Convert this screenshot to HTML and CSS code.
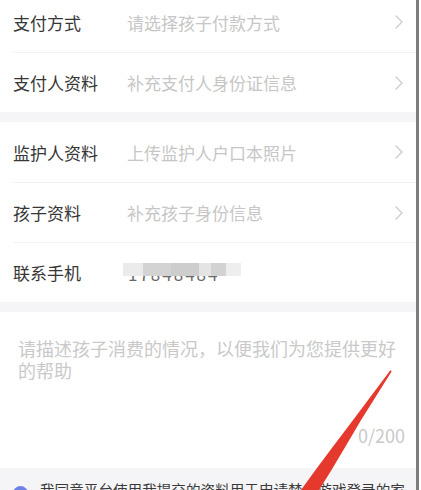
FILE: index.html
```html
<!DOCTYPE html>
<html lang="zh-CN">
<head>
<meta charset="utf-8">
<title>申请</title>
<link rel="stylesheet" href="styles.css">
</head>
<body>
<div class="page">
  <section class="group">
    <div class="row">
      <span class="label">支付方式</span>
      <span class="hint">请选择孩子付款方式</span>
      <svg class="chev" viewBox="0 0 8 14" width="8" height="14"><polyline points="1,1 7,7 1,13" /></svg>
    </div>
    <div class="row">
      <span class="label">支付人资料</span>
      <span class="hint">补充支付人身份证信息</span>
      <svg class="chev" viewBox="0 0 8 14" width="8" height="14"><polyline points="1,1 7,7 1,13" /></svg>
    </div>
  </section>
  <div class="band"></div>
  <section class="group">
    <div class="row">
      <span class="label">监护人资料</span>
      <span class="hint">上传监护人户口本照片</span>
      <svg class="chev" viewBox="0 0 8 14" width="8" height="14"><polyline points="1,1 7,7 1,13" /></svg>
    </div>
    <div class="row">
      <span class="label">孩子资料</span>
      <span class="hint">补充孩子身份信息</span>
      <svg class="chev" viewBox="0 0 8 14" width="8" height="14"><polyline points="1,1 7,7 1,13" /></svg>
    </div>
    <div class="row">
      <span class="label">联系手机</span>
      <span class="phone">
        <span class="digits">17848484</span>
        <span class="mosaic">
          <i class="m1"></i><i class="m2"></i><i class="m3"></i><i class="m4"></i><i class="m5"></i><i class="m6"></i>
        </span>
      </span>
    </div>
  </section>
  <div class="band"></div>
  <section class="desc">
    <p class="desc-hint">请描述孩子消费的情况，以便我们为您提供更好的帮助</p>
    <div class="count">0/200</div>
  </section>
  <footer class="agree">
    <span class="dot"></span>
    <span class="agree-text">我同意平台使用我提交的资料用于申请禁止游戏登录的家长监护服务</span>
  </footer>
</div>
<svg class="arrow" viewBox="0 0 421 490" width="421" height="490">
  <polygon points="390.5,370 391.6,371.6 361.1,420 343.4,450 331.5,470 319,490 313.3,500 293.3,500 301,490 315.5,470 330.4,450 353.1,420 389.4,371.6" />
</svg>
</body>
</html>
```

FILE: styles.css
```css
html, body {
  margin: 0;
  padding: 0;
  background: #ffffff;
  overflow: hidden;
  height: 490px;
}

body {
  position: relative;
  font-family: "Noto Sans CJK SC", "Noto Sans", sans-serif;
  color: #333333;
}

.page {
  width: 416px;
  margin-top: -8px;
  border-right: 3px solid #7e7e7e;
  background: #ffffff;
}

.group {
  background: #ffffff;
}

.row {
  box-sizing: border-box;
  height: 60px;
  margin-left: 13px;
  padding-right: 13px;
  display: flex;
  align-items: center;
  font-size: 17px;
}

.row + .row {
  border-top: 1px solid #f2f2f2;
}

.label {
  width: 114px;
  flex: none;
  color: #363636;
}

.hint {
  flex: 1;
  color: #c6c6c6;
}

.chev {
  flex: none;
  fill: none;
  stroke: #cccccc;
  stroke-width: 1.3;
  stroke-linecap: round;
  stroke-linejoin: round;
}

.band {
  height: 10px;
  background: #f5f5f7;
}

.phone {
  position: relative;
  display: inline-block;
  width: 118px;
  height: 24px;
  margin-left: -4px;
  margin-top: 2px;
}

.digits {
  position: absolute;
  left: 5px;
  top: 2px;
  font-size: 17px;
  line-height: 20px;
  color: #6a6a6a;
  letter-spacing: 2px;
}

.mosaic {
  position: absolute;
  left: 0;
  top: 1px;
  height: 13px;
  width: 118px;
  display: flex;
}

.mosaic i {
  display: block;
  height: 13px;
}

.mosaic .m1 { width: 20px; background: #ebebeb; }
.mosaic .m2 { width: 28px; background: #d3d3d3; }
.mosaic .m3 { width: 28px; background: #cdcdcd; }
.mosaic .m4 { width: 12px; background: #e4e4e4; }
.mosaic .m5 { width: 15px; background: #d2d2d2; }
.mosaic .m6 { width: 15px; background: #eeeeee; }

.desc {
  background: #ffffff;
  padding: 25px 0 22px;
}

.desc-hint {
  margin: 0;
  padding: 0 18px;
  font-size: 18px;
  line-height: 22px;
  color: #c9c9c9;
}

.count {
  margin-top: 43px;
  padding-right: 11px;
  text-align: right;
  font-size: 18px;
  line-height: 22px;
  color: #c9c9c9;
}

.agree {
  background: #f5f5f7;
  padding: 11px 4px 20px 13px;
  display: flex;
  align-items: flex-start;
}

.dot {
  flex: none;
  width: 15px;
  height: 15px;
  margin-top: 7px;
  margin-right: 12px;
  border-radius: 50%;
  background: #6c82e6;
}

.agree-text {
  font-size: 14.6px;
  line-height: 22px;
  color: #3a3a3a;
}

.arrow {
  position: absolute;
  left: 0;
  top: 0;
  pointer-events: none;
}

.arrow polygon {
  fill: #e5392e;
}
```
